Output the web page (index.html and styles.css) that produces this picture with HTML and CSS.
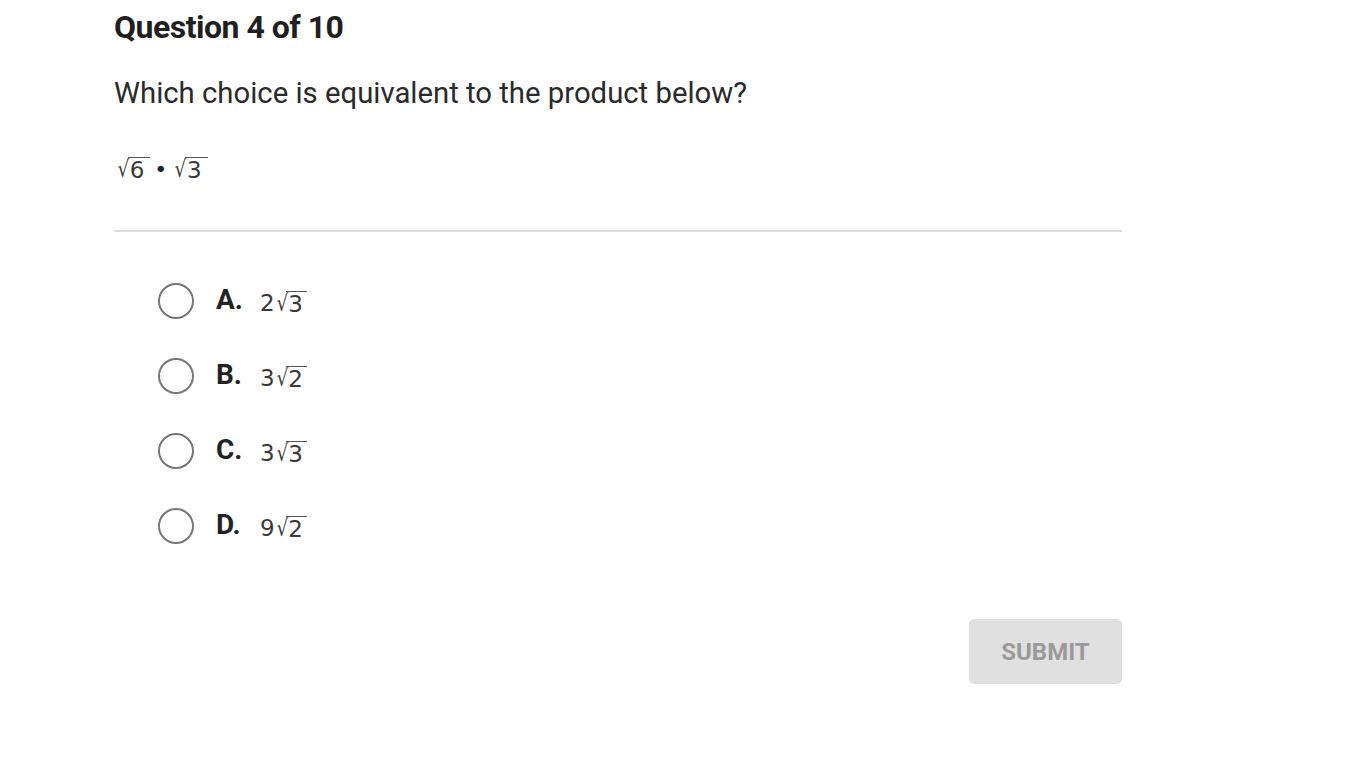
FILE: index.html
```html
<!DOCTYPE html>
<html>
<head>
<meta charset="utf-8">
<link rel="stylesheet" href="styles.css">
</head>
<body>
<main class="quiz">
  <h1 class="title">Question 4 of 10</h1>
  <p class="prompt">Which choice is equivalent to the product below?</p>
  <div class="expr">
    <span class="rad">√</span><span class="radicand">6</span>
    <span class="dot">•</span>
    <span class="rad">√</span><span class="radicand">3</span>
  </div>
  <hr class="divider">
  <ul class="choices">
    <li class="choice"><span class="radio"></span><span class="letter">A.</span><span class="ans">2<span class="rad">√</span><span class="radicand">3</span></span></li>
    <li class="choice"><span class="radio"></span><span class="letter">B.</span><span class="ans">3<span class="rad">√</span><span class="radicand">2</span></span></li>
    <li class="choice"><span class="radio"></span><span class="letter">C.</span><span class="ans">3<span class="rad">√</span><span class="radicand">3</span></span></li>
    <li class="choice"><span class="radio"></span><span class="letter">D.</span><span class="ans">9<span class="rad">√</span><span class="radicand">2</span></span></li>
  </ul>
  <div class="actions">
    <button class="submit">SUBMIT</button>
  </div>
</main>
</body>
</html>
```
FILE: styles.css
```css
html, body {
  margin: 0;
  padding: 0;
  background: #fff;
}
body {
  font-family: Roboto, "Liberation Sans", sans-serif;
  color: #222;
}
.quiz {
  width: 1008px;
  margin-left: 114px;
  padding-top: 8px;
}
.title {
  margin: 0;
  font-size: 32px;
  font-weight: 700;
  line-height: 38px;
  color: #1f1f1f;
  letter-spacing: -0.5px;
}
.prompt {
  margin: 30px 0 0;
  font-size: 29.3px;
  line-height: 34px;
  color: #2a2a2a;
}
.expr {
  margin-top: 44px;
  margin-left: 2px;
  font-family: "DejaVu Sans", sans-serif;
  font-size: 23px;
  color: #3a3a3a;
  display: flex;
  align-items: center;
  height: 30px;
}
.rad {
  font-size: 23px;
  display: inline-block;
  transform: scaleX(0.8);
  margin-right: -2px;
}
.radicand {
  display: inline-block;
  border-top: 1px solid #555;
  line-height: 22px;
  padding: 1px 6px 0 2px;
  margin-left: -1px;
}
.dot {
  font-size: 22px;
  margin: 0 6px 0 4px;
  color: #222;
}
.divider {
  margin: 46px 0 0;
  border: 0;
  border-top: 2px solid #ddd;
  height: 0;
}
.choices {
  list-style: none;
  margin: 51px 0 0;
  padding: 0 0 0 44px;
  display: flex;
  flex-direction: column;
  gap: 39px;
}
.choice {
  display: flex;
  align-items: center;
  height: 36px;
}
.radio {
  width: 32px;
  height: 32px;
  border: 2px solid #777;
  border-radius: 50%;
  flex: none;
}
.letter {
  margin-left: 22px;
  font-weight: 700;
  font-size: 28px;
  color: #222;
  width: 44px;
  position: relative;
  top: -2px;
}
.ans {
  font-family: "DejaVu Sans", sans-serif;
  font-size: 23px;
  color: #3a3a3a;
  display: inline-flex;
  align-items: center;
  position: relative;
  top: 2px;
}
.ans .radicand {
  padding-right: 4px;
}
.actions {
  display: flex;
  justify-content: flex-end;
  margin-top: 75px;
}
.submit {
  width: 153px;
  height: 65px;
  border: 0;
  border-radius: 5px;
  background: #e0e0e0;
  color: #9a9a9a;
  font-family: Roboto, "Liberation Sans", sans-serif;
  font-weight: 700;
  font-size: 24px;
  cursor: default;
}
```
